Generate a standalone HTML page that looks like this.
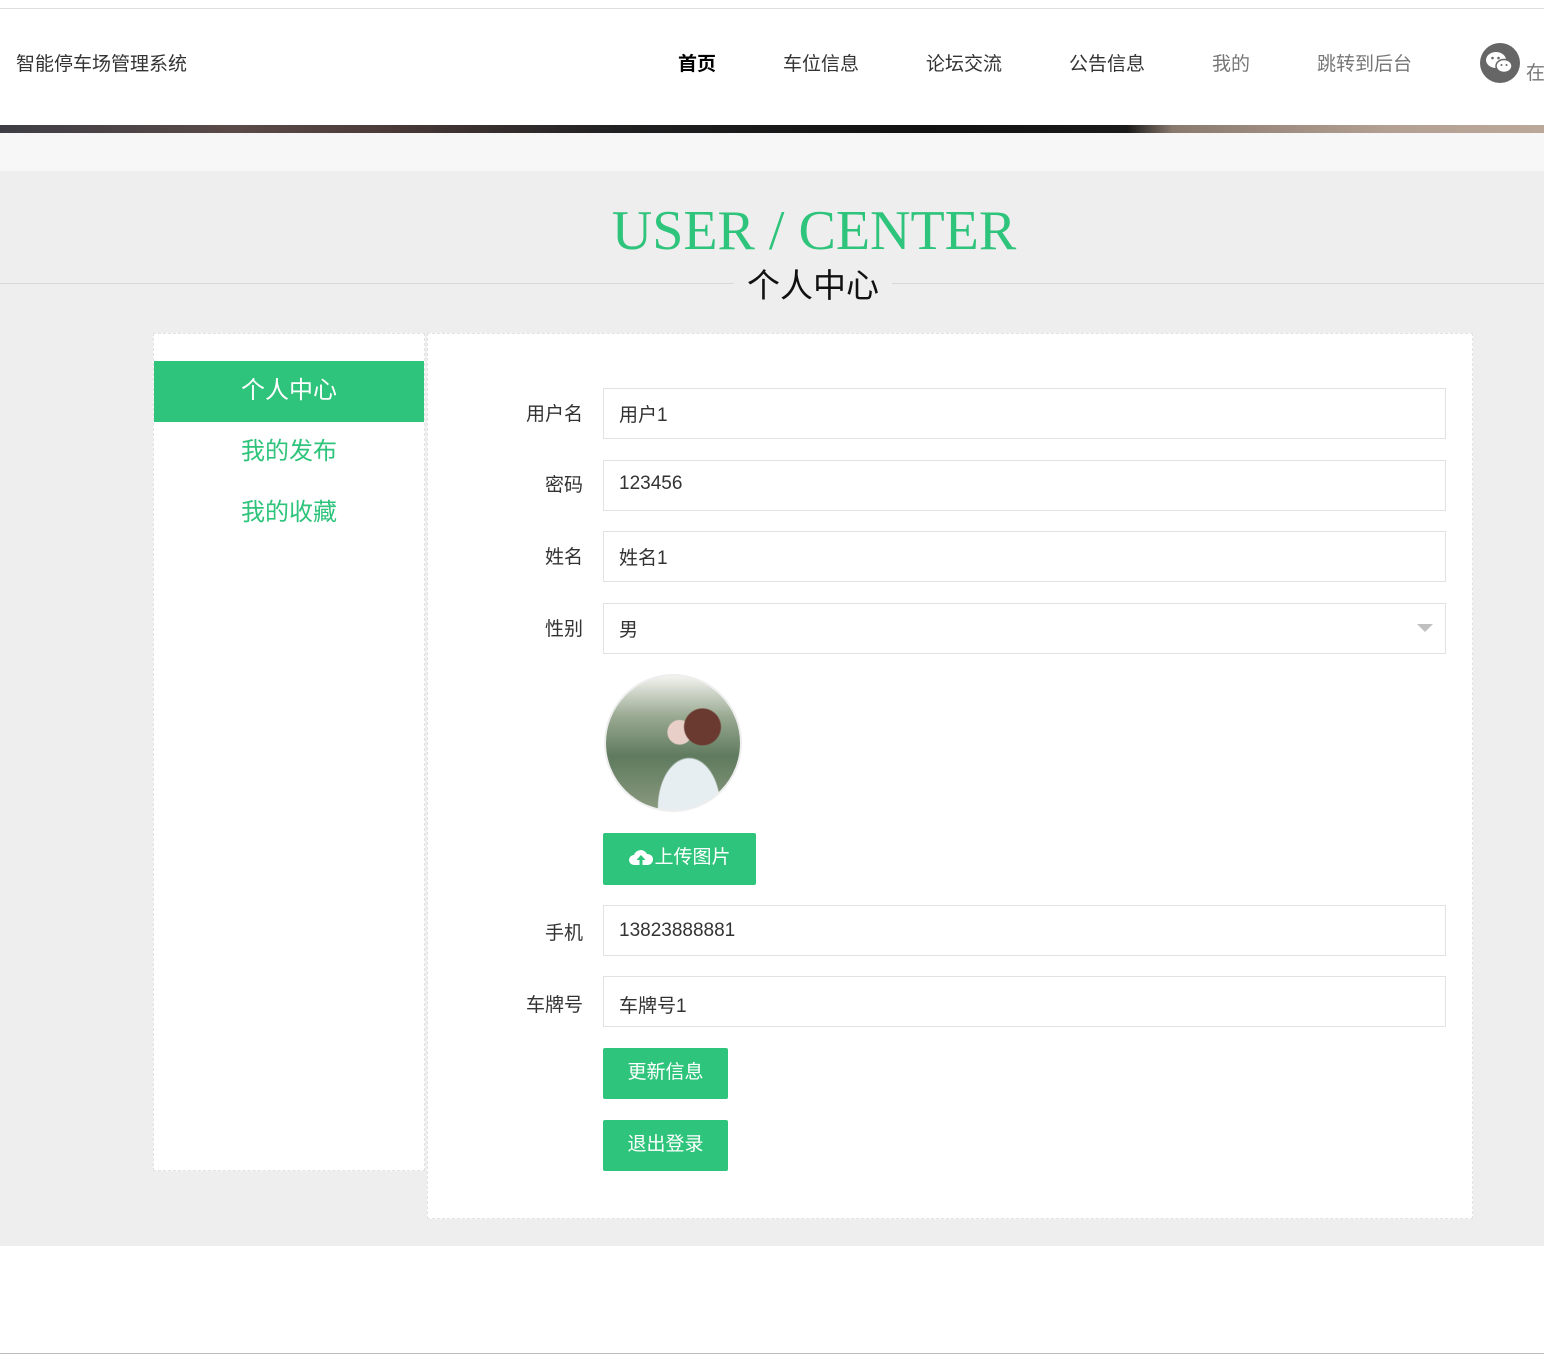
<!DOCTYPE html>
<html><head><meta charset="utf-8"><style>
*{margin:0;padding:0;box-sizing:border-box}
body{width:1544px;height:1355px;position:relative;background:#fff;font-family:"Liberation Sans","Noto Sans CJK SC",sans-serif;overflow:hidden}
.a{position:absolute}
.nav{font-size:19px;color:#333;top:49px}
.lbl{position:absolute;right:961px;font-size:19px;color:#333;width:100px;text-align:right}
.inp{position:absolute;left:603px;width:843px;height:51px;border:1px solid #e2e2e2;background:#fff;font-size:19px;color:#333;padding:12px 0 0 15px}
.btn{position:absolute;left:603px;height:51px;background:#2fc47b;color:#fff;font-size:19px;border-radius:2px;text-align:center;line-height:49px}
</style></head><body>
<div class="a" style="top:8px;left:0;width:1544px;height:1px;background:#ddd"></div>
<div class="a" style="left:16px;top:49px;font-size:19px;color:#333">智能停车场管理系统</div>
<div class="a nav" style="left:678px;font-weight:bold;color:#000">首页</div>
<div class="a nav" style="left:783px">车位信息</div>
<div class="a nav" style="left:926px">论坛交流</div>
<div class="a nav" style="left:1069px">公告信息</div>
<div class="a nav" style="left:1212px;color:#777">我的</div>
<div class="a nav" style="left:1317px;color:#777">跳转到后台</div>
<div class="a" style="left:1480px;top:43px;width:40px;height:40px;border-radius:50%;background:#666"></div>
<svg class="a" style="left:1484px;top:50px" width="32" height="26" viewBox="0 0 32 26"><ellipse cx="12" cy="10" rx="10" ry="8" fill="#fff"/><ellipse cx="20" cy="16" rx="8" ry="6.5" fill="#fff" stroke="#666" stroke-width="1.5"/><circle cx="8.5" cy="8" r="1.3" fill="#666"/><circle cx="14.5" cy="8" r="1.3" fill="#666"/><circle cx="17.5" cy="15" r="1" fill="#666"/><circle cx="22.5" cy="15" r="1" fill="#666"/></svg>
<div class="a" style="left:1526px;top:58px;font-size:19px;color:#777">在</div>
<div class="a" style="top:125px;left:0;width:1544px;height:8px;background:linear-gradient(90deg,#3e3d45 0%,#5a4a48 15%,#4a3a38 25%,#202022 40%,#111 60%,#1a1a1a 73%,#8a7a6e 76%,#b3a093 90%,#bba898 100%)"></div>
<div class="a" style="top:133px;left:0;width:1544px;height:38px;background:#f7f7f7"></div>
<div class="a" style="top:171px;left:0;width:1544px;height:1075px;background:#eee"></div>
<div class="a" style="top:283px;left:0;width:1544px;height:1px;background:#d8d8d8"></div>
<div class="a" style="top:196px;left:0;width:1544px;text-align:center;padding-left:84px;font-family:'Liberation Serif',serif;font-size:56px;color:#2fc47b;line-height:70px">USER / CENTER</div>
<div class="a" style="top:264px;left:734px;width:158px;background:#eee;text-align:center;font-size:33px;color:#111;line-height:44px">个人中心</div>
<div class="a" style="left:153px;top:333px;width:272px;height:838px;background:#fff;border:1px dashed #e2e2e2"></div>
<div class="a" style="left:427px;top:333px;width:1046px;height:886px;background:#fff;border:1px dashed #e2e2e2"></div>
<div class="a" style="left:154px;top:361px;width:270px;height:61px;background:#2fc47b;color:#fff;font-size:24px;text-align:center;line-height:59px">个人中心</div>
<div class="a" style="left:154px;top:422px;width:270px;height:61px;color:#2fc47b;font-size:24px;text-align:center;line-height:59px">我的发布</div>
<div class="a" style="left:154px;top:483px;width:270px;height:61px;color:#2fc47b;font-size:24px;text-align:center;line-height:59px">我的收藏</div>
<div class="lbl" style="top:399px">用户名</div><div class="inp" style="top:388px;padding-top:11px">用户1</div>
<div class="lbl" style="top:470px">密码</div><div class="inp" style="top:460px">123456</div>
<div class="lbl" style="top:542px">姓名</div><div class="inp" style="top:531px;padding-top:11px">姓名1</div>
<div class="lbl" style="top:614px">性别</div><div class="inp" style="top:603px;padding-top:11px">男</div>
<div class="a" style="left:1417px;top:624px;width:0;height:0;border-left:8px solid transparent;border-right:8px solid transparent;border-top:8px solid #c0c0c0"></div>
<div class="a" style="left:604px;top:674px;width:138px;height:138px;border-radius:50%;border:2px solid #eee;background:radial-gradient(circle at 72% 38%,#6a3a30 0 14%,transparent 15%),radial-gradient(circle at 55% 42%,#e8d0c8 0 11%,transparent 12%),radial-gradient(ellipse at 62% 98%,#e6eef2 0 26%,transparent 27%),linear-gradient(180deg,#f2f2ee 0%,#9aaa92 30%,#5f7a5e 60%,#8a9a80 100%)"></div>
<div class="btn" style="top:833px;width:153px;height:52px;line-height:50px"><svg width="26" height="18" viewBox="0 0 26 18" style="vertical-align:-3px"><path d="M6 17a5 5 0 0 1 0-10a7 7 0 0 1 13-1a5.5 5.5 0 0 1 1 11z" fill="#fff"/><path d="M13 7l-4.5 5h3v5h3v-5h3z" fill="#2fc47b"/></svg>上传图片</div>
<div class="lbl" style="top:918px">手机</div><div class="inp" style="top:905px;padding-top:14px">13823888881</div>
<div class="lbl" style="top:990px">车牌号</div><div class="inp" style="top:976px;padding-top:14px">车牌号1</div>
<div class="btn" style="top:1048px;width:125px">更新信息</div>
<div class="btn" style="top:1120px;width:125px">退出登录</div>
<div class="a" style="top:1353px;left:0;width:1544px;height:1px;background:#bbb"></div>
</body></html>
